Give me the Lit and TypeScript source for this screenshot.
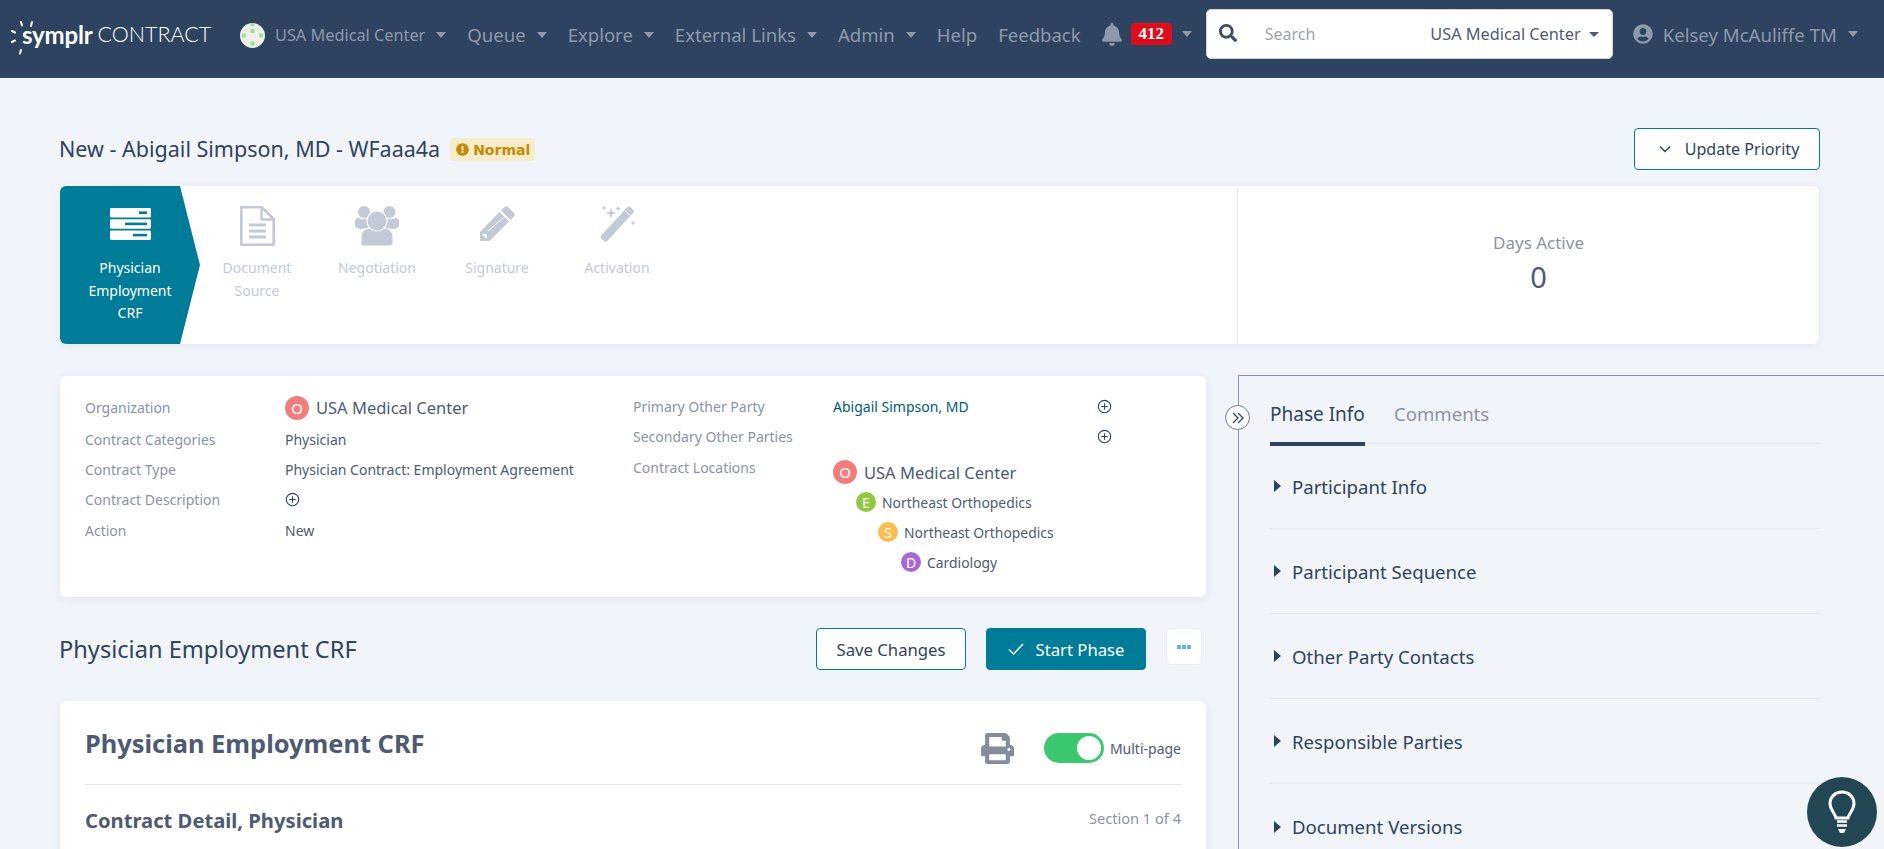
import { LitElement, html, css, svg } from "lit";
import { customElement } from "lit/decorators.js";

const P = {
  bell: "M224 512c35.32 0 63.97-28.65 63.97-64H160.03c0 35.35 28.65 64 63.97 64zm215.39-149.71c-19.32-20.76-55.47-51.99-55.47-154.29 0-77.7-54.48-139.9-127.94-155.16V32c0-17.67-14.32-32-31.98-32s-31.98 14.33-31.98 32v20.84C118.56 68.1 64.08 130.3 64.08 208c0 102.3-36.15 133.53-55.47 154.29-6 6.45-8.66 14.16-8.61 21.71.11 16.4 12.98 32 32.1 32h383.8c19.12 0 32-15.6 32.1-32 .05-7.55-2.61-15.27-8.61-21.71z",
  search: "M505 442.7L405.3 343c-4.5-4.5-10.6-7-17-7H372c27.6-35.3 44-79.7 44-128C416 93.1 322.9 0 208 0S0 93.1 0 208s93.1 208 208 208c48.3 0 92.7-16.4 128-44v16.3c0 6.4 2.5 12.5 7 17l99.7 99.7c9.4 9.4 24.6 9.4 33.9 0l28.3-28.3c9.4-9.4 9.4-24.6.1-34zM208 336c-70.7 0-128-57.2-128-128 0-70.7 57.2-128 128-128 70.7 0 128 57.2 128 128 0 70.7-57.2 128-128 128z",
  user: "M248 8C111 8 0 119 0 256s111 248 248 248 248-111 248-248S385 8 248 8zm0 96c48.6 0 88 39.4 88 88s-39.4 88-88 88-88-39.4-88-88 39.4-88 88-88zm0 344c-58.7 0-111.3-26.6-146.5-68.2 18.8-35.4 55.6-59.8 98.5-59.8 2.4 0 4.8.4 7.1 1.1 13 4.2 26.6 6.9 40.9 6.9 14.3 0 28-2.7 40.9-6.9 2.3-.7 4.7-1.1 7.1-1.1 42.9 0 79.7 24.4 98.5 59.8C359.3 421.4 306.7 448 248 448z",
  print: "M448 192V77.25c0-8.49-3.37-16.62-9.37-22.63L393.37 9.37c-6-6-14.14-9.37-22.63-9.37H96C78.33 0 64 14.33 64 32v160c-35.35 0-64 28.65-64 64v112c0 8.84 7.16 16 16 16h48v96c0 17.67 14.33 32 32 32h320c17.67 0 32-14.33 32-32v-96h48c8.84 0 16-7.16 16-16V256c0-35.35-28.65-64-64-64zm-64 256H128v-96h256v96zm0-224H128V64h192v48c0 8.84 7.16 16 16 16h48v96zm48 72c-13.25 0-24-10.75-24-24 0-13.26 10.75-24 24-24s24 10.74 24 24c0 13.25-10.75 24-24 24z",
  warn: "M504 256c0 136.997-111.043 248-248 248S8 392.997 8 256C8 119.083 119.043 8 256 8s248 111.083 248 248zm-248 50c-25.405 0-46 20.595-46 46s20.595 46 46 46 46-20.595 46-46-20.595-46-46-46zm-43.673-165.346l7.418 136c.347 6.364 5.609 11.346 11.982 11.346h48.546c6.373 0 11.635-4.982 11.982-11.346l7.418-136c.375-6.874-5.098-12.654-11.982-12.654h-63.383c-6.884 0-12.356 5.78-11.981 12.654z",
};

const caret = html`<span class="caret"></span>`;
const plus = html`<svg class="plus" viewBox="0 0 16 16"><circle cx="8" cy="8" r="6.6" fill="none" stroke="#2e4360" stroke-width="1.2"/><path d="M8 4.6v6.8M4.6 8h6.8" stroke="#2e4360" stroke-width="1.2"/></svg>`;

const spark = (x: number, y: number, r: number) =>
  `M${x} ${y - r}L${x + r * 0.22} ${y - r * 0.22}L${x + r} ${y}L${x + r * 0.22} ${y + r * 0.22}L${x} ${y + r}L${x - r * 0.22} ${y + r * 0.22}L${x - r} ${y}L${x - r * 0.22} ${y - r * 0.22}Z`;

const icons = {
  form: svg`<svg class="ico" style="width:41px;height:32px" viewBox="0 0 41 32"><g fill="#fff"><rect width="41" height="9.6" rx="1.4"/><rect y="11.2" width="41" height="9.6" rx="1.4"/><rect y="22.4" width="41" height="9.6" rx="1.4"/></g><g fill="#007c99"><rect x="29" y="3.4" width="8" height="2.6"/><rect x="15" y="14.6" width="22" height="2.6"/><rect x="23" y="25.8" width="14" height="2.6"/></g></svg>`,
  doc: svg`<svg class="ico" style="width:35px;height:40px" viewBox="0 0 35 40"><path d="M2.500 1.300h19.500L33.700 13v25.700H1.300V1.300z" fill="none" stroke="#c3c9d6" stroke-width="2.600" stroke-linejoin="round"/><path d="M21.500 2v11.500H33" fill="none" stroke="#c3c9d6" stroke-width="2.400"/><path d="M9 19h17M9 25h17M9 31h17" stroke="#c3c9d6" stroke-width="3"/></svg>`,
  users: svg`<svg class="ico" style="width:44px;height:40px" viewBox="0 0 44 40"><g fill="#c3c9d6"><circle cx="9" cy="6" r="6"/><circle cx="34.500" cy="6" r="6"/><path d="M0 15.500c0-2.300 2-3.800 4-3.300 3 1.300 5 1.300 8 .3l2 9-7 1.500c-4 0-7-1.500-7-4z"/><path d="M44 15.500c0-2.300-2-3.800-4-3.300-3 1.300-5 1.300-8 .3l-2 9 7 1.500c4 0 7-1.500 7-4z"/><path d="M6 40V31c0-5 4-9 9-9h14c5 0 9 4 9 9v5c0 2.500-1.500 4-4 4z" stroke="#fff" stroke-width="1"/><circle cx="22" cy="15" r="10" stroke="#fff" stroke-width="1.200"/></g></svg>`,
  pencil: svg`<svg class="ico" style="width:35px;height:35px" viewBox="0 0 35 35"><g fill="#c3c9d6"><path d="M24.500 1c1-1 2.500-1 3.500 0l6 6c1 1 1 2.500 0 3.500l-3.500 3.500L21 4.500z"/><path d="M19.500 6L29 15.500 10 34.500l-1 .5H0v-9z"/></g><path d="M8 25L26 9.500" stroke="#fff" stroke-width="1"/><path d="M2.500 28.500l3 .500.500 3" fill="none" stroke="#fff" stroke-width="2"/></svg>`,
  wand: svg`<svg class="ico" style="width:37px;height:36px" viewBox="0 0 37 36"><g fill="#c3c9d6"><path d="M28.500 1c.8-.8 2-.8 2.800 0l3 3c.8.8.8 2 0 2.800L8 35.200c-.8.800-2 .8-2.800 0l-3-3c-.8-.8-.8-2 0-2.800z"/><path d="${spark(12, 7, 5.5)}"/><path d="${spark(5, 2, 3)}"/><path d="${spark(19, 2.5, 3)}"/><path d="${spark(34, 17, 3)}"/></g><path d="M26 4.500l5 5" stroke="#fff" stroke-width="1"/></svg>`,
};

@customElement("app-root")
export class AppRoot extends LitElement {
  static styles = css`
    :host { display: block; width: 1884px; height: 849px; overflow: hidden; background: #f1f4f9; font-family: "Noto Sans", sans-serif; color: #2e4360; position: relative; }
    * { box-sizing: border-box; }
    svg { display: block; flex: none; }

    .nav { height: 78px; background: #2e4360; display: flex; align-items: center; padding: 0 0 10px 10px; color: #8e9aaa; font-size: 18.55px; white-space: nowrap; }
    .logo { display: flex; align-items: center; width: 230px; color: #fff; }
    .logo .sun { width: 24px; height: 40px; margin-right: -12px; overflow: visible; }
    .logo .sym { font-family: "Lato", sans-serif; font-weight: 700; font-size: 24px; letter-spacing: -.2px; margin-right: 5px; }
    .logo .con { font-family: "Lato", sans-serif; font-weight: 300; font-size: 21.5px; }
    .globe { width: 25px; height: 25px; margin: 3px 10px 0 0; }
    .org { font-size: 16.3px; }
    .item { display: flex; align-items: center; margin-right: 21px; padding-top: 1px; }
    .caret { display: inline-block; width: 0; height: 0; border-left: 5.5px solid transparent; border-right: 5.5px solid transparent; border-top: 6px solid currentColor; margin-left: 11px; }
    .bell { width: 20px; height: 23px; fill: #8e9aaa; margin-right: 9px; }
    .badge412 { background: #df0c1c; color: #fff; font: 700 17px "Liberation Serif", serif; border-radius: 4px; width: 41px; height: 22px; display: flex; align-items: center; justify-content: center; }
    .notif { margin-right: 14px; padding-top: 0; }
    .notif .caret { margin-left: 10px; }
    .searchbox { width: 407px; height: 50px; background: #fff; border: 1px solid #cfd5dd; border-radius: 5px; display: flex; align-items: center; padding: 0 13px 0 12px; margin-right: 20px; color: #4e5a73; font-size: 16.3px; }
    .searchbox .mag { width: 18px; height: 18px; fill: #3b4c66; margin-right: 28px; margin-top: -2px; }
    .searchbox .ph { color: #a0a3a8; flex: 1; font-size: 16px; }
    .searchbox .caret { margin-left: 8px; border-left-width: 5px; border-right-width: 5px; border-top-width: 5px; }
    .me { display: flex; align-items: center; font-size: 18.6px; }
    .me .uc { width: 20px; height: 20px; fill: #8e9aaa; margin-right: 10px; }

    .main { padding: 50px 65px 0 60px; }
    .titlebar { display: flex; align-items: center; height: 41px; margin-bottom: 17px; }
    .titlebar h1 { margin: 0 0 0 -1px; font-size: 21.5px; font-weight: 400; color: #2e4360; }
    .pri { display: flex; align-items: center; gap: 4px; height: 23px; width: 85px; padding-left: 6px; margin-left: 10px; margin-top: 2px; background: #f6ecc9; color: #c58a08; border-radius: 4px; font: 700 14px "DejaVu Sans", sans-serif; }
    .pri svg { width: 13px; height: 13px; fill: #c58a08; }
    .btn { display: flex; align-items: center; justify-content: center; height: 42px; border: 1px solid #007c99; background: #fff; border-radius: 4px; font-size: 16.7px; color: #2e4360; white-space: nowrap; }
    .upd { width: 186px; margin: 0 -1px 0 auto; gap: 14px; font-size: 16.1px; padding-left: 4px; }
    .upd svg { width: 12px; height: 8px; }

    .stages { height: 158px; background: #fff; border-radius: 6px; box-shadow: 0 2px 8px rgba(60,80,110,.08); display: flex; overflow: hidden; }
    .step { width: 120px; display: flex; flex-direction: column; align-items: center; text-align: center; color: #c3c9d6; font-size: 14px; line-height: 22.5px; }
    .step .icw { height: 48px; margin-top: 20px; margin-bottom: 3px; display: flex; align-items: flex-start; }
    .step.first { width: 140px; margin-right: -3px; background: #007c99; color: #fff; clip-path: polygon(0 0, 120px 0, 140px 50%, 120px 100%, 0 100%); }
    .step.first .icw { margin-top: 22px; height: 46px; }
    .days { margin-left: auto; width: 582px; border-left: 1px solid #e6e9ee; padding: 45px 0 0 20px; text-align: center; color: #8b93a3; font-size: 17px; }
    .days b { display: block; font-weight: 400; font-size: 29px; color: #4e5a73; line-height: 40px; margin-top: 3px; }

    .cols { display: flex; margin-top: 32px; }
    .left { width: 1146px; flex: none; }

    .card { background: #fff; border-radius: 6px; box-shadow: 0 2px 8px rgba(60,80,110,.08); }
    .info { height: 221px; display: grid; grid-template-columns: 548px 1fr; padding: 15px 0 0 25px; font-size: 14px; }
    .irow { display: flex; align-items: center; height: 30px; }
    .k { color: #8b93a3; flex: none; width: 200px; }
    .c1 .irow { color: #4e5a73; }
    .c1 .irow.top { height: 33px; }
    .c1 .irow.last { height: 32px; }
    .link { color: #005b73; width: 0; white-space: nowrap; }
    .plus { width: 15px; height: 15px; }
    .c2 .plus { margin-left: 264px; }
    .orgv { display: flex; align-items: center; gap: 7px; font-size: 16.5px; color: #4e5a73; }
    .dot { width: 24px; height: 24px; border-radius: 50%; display: flex; align-items: center; justify-content: center; color: #fff; font-size: 15px; flex: none; }
    .dot.o { background: #f27d7d; }
    .dot.sm { width: 20px; height: 20px; font-size: 14px; }
    .dot.e { background: #90c83f; }
    .dot.s { background: #fbbd51; }
    .dot.d { background: #aa68d3; }
    .tree { display: flex; align-items: center; gap: 6px; height: 30px; color: #4e5a73; font-size: 13.9px; }
    .tree.l1 { padding-left: 23px; }
    .tree.l2 { padding-left: 45px; }
    .tree.l3 { padding-left: 68px; }
    .locs { display: flex; align-items: flex-start; }
    .locs .k { margin-top: 7px; line-height: 19px; }
    .locs .orgv { height: 30px; margin-top: 6px; }

    .phase { display: flex; align-items: center; height: 42px; margin: 31px 0; }
    .phase h2 { margin: 0 auto 0 -1px; font-size: 23.6px; font-weight: 400; color: #2e4360; }
    .save { width: 150px; }
    .start { width: 160px; margin-left: 20px; background: #007c99; color: #fff; gap: 12px; }
    .start svg { width: 16px; height: 12px; }
    .more { width: 36px; height: 37px; margin: 0 4px 5px 20px; background: #fff; border: 1px solid #e9ecf1; border-radius: 4px; display: flex; align-items: center; justify-content: center; gap: 1px; }
    .more i { width: 4px; height: 4px; background: #62b4ea; display: block; }

    .form { height: 300px; padding: 0 25px; }
    .fhead { display: flex; align-items: center; height: 84px; border-bottom: 1px solid #e3e6ea; }
    .fhead h3 { margin: 0 auto 0 0; font-size: 25.4px; font-weight: 700; color: #4e5a73; }
    .prt { width: 33px; height: 31px; fill: #858d9c; margin: 11px 30px 0 0; }
    .tog { width: 60px; height: 30px; background: #3bc86f; border-radius: 15px; display: flex; align-items: center; justify-content: flex-end; padding-right: 3px; margin: 11px 6px 0 0; }
    .tog i { width: 24px; height: 24px; background: #fff; border-radius: 50%; display: block; }
    .mp { font-size: 14px; color: #4e5a73; margin-top: 11px; }
    .sect { display: flex; align-items: center; justify-content: space-between; height: 70px; }
    .sect h4 { margin: 0; font-size: 20.2px; font-weight: 700; color: #4e5a73; }
    .sect span { font-size: 14.6px; color: #8b93a3; margin-top: -4px; }

    .panel { position: relative; margin: -1px -65px 0 32px; flex: none; width: 646px; height: 600px; border-left: 1px solid #8a93a5; border-top: 1px solid #8a93a5; padding: 0 64px 0 31px; }
    .coll { position: absolute; left: -14px; top: 29px; width: 25px; height: 25px; border-radius: 50%; background: #fff; border: 1px solid #6b7a90; display: flex; align-items: center; justify-content: center; }
    .coll svg { width: 14px; height: 12px; }
    .tabs { display: flex; gap: 29px; height: 68px; border-bottom: 1px solid #e6e9ee; font-size: 19px; }
    .tab { color: #8b93a3; padding-top: 25px; height: 70px; line-height: 26px; font-size: 18.6px; }
    .tab.on { color: #2e4360; border-bottom: 4px solid #2e4360; font-size: 19px; }
    .acc { height: 85px; border-bottom: 1px solid #e6e9ee; display: flex; align-items: center; font-size: 18.6px; color: #2e4360; padding-left: 4px; gap: 11px; }
    .acc:last-child { border-bottom: none; }
    .tri { width: 0; height: 0; border-top: 6px solid transparent; border-bottom: 6px solid transparent; border-left: 7px solid #2e4360; flex: none; }
    .fab { position: absolute; left: 1807px; top: 777px; width: 70px; height: 70px; border-radius: 50%; background: #224654; display: flex; align-items: center; justify-content: center; }
    .fab svg { width: 28px; height: 44px; }
  `;

  render() {
    const nav = (t: string) => html`<div class="item">${t}${caret}</div>`;
    const accs = ["Participant Info", "Participant Sequence", "Other Party Contacts", "Responsible Parties", "Document Versions"];
    return html`
      <header class="nav">
        <div class="logo">
          <svg class="sun" viewBox="0 0 24 40"><g stroke="#fff" stroke-width="2" stroke-linecap="round" fill="none"><path d="M11 8l1 3.500M22 8l-1 4M2 17l3 1.500M2 28l3-1.500M11 36l-1 3.500"/></g></svg>
          <span class="sym">symplr</span><span class="con">CONTRACT</span>
        </div>
        <svg class="globe" viewBox="0 0 25 25"><circle cx="12.500" cy="12.500" r="12.500" fill="#ecf1ec"/><g fill="#a4dc90"><rect x="10.500" y="0" width="4" height="3"/><rect x="10.500" y="6" width="4" height="4"/><rect x="2" y="10.500" width="4" height="4"/><rect x="19" y="10.500" width="4" height="4"/><rect x="10.500" y="18.500" width="4" height="4"/></g></svg>
        <div class="item org">USA Medical Center${caret}</div>
        ${nav("Queue")}${nav("Explore")}${nav("External Links")}${nav("Admin")}
        <div class="item">Help</div>
        <div class="item">Feedback</div>
        <div class="item notif">
          <svg class="bell" viewBox="0 0 448 512"><path d="${P.bell}"/></svg>
          <span class="badge412">412</span>${caret}
        </div>
        <div class="searchbox">
          <svg class="mag" viewBox="0 0 512 512"><path d="${P.search}"/></svg>
          <span class="ph">Search</span>
          <span>USA Medical Center</span>${caret}
        </div>
        <div class="me">
          <svg class="uc" viewBox="0 0 496 512"><path d="${P.user}"/></svg>
          Kelsey McAuliffe TM${caret}
        </div>
      </header>

      <main class="main">
        <div class="titlebar">
          <h1>New - Abigail Simpson, MD - WFaaa4a</h1>
          <span class="pri"><svg viewBox="0 0 512 512"><path d="${P.warn}"/></svg>Normal</span>
          <div class="btn upd">
            <svg viewBox="0 0 12 8"><path d="M1 1.500l5 5 5-5" fill="none" stroke="#2e4360" stroke-width="1.500"/></svg>
            Update Priority
          </div>
        </div>

        <section class="stages">
          <div class="step first"><div class="icw">${icons.form}</div><div>Physician<br />Employment<br />CRF</div></div>
          <div class="step"><div class="icw">${icons.doc}</div><div>Document<br />Source</div></div>
          <div class="step"><div class="icw">${icons.users}</div><div>Negotiation</div></div>
          <div class="step"><div class="icw">${icons.pencil}</div><div>Signature</div></div>
          <div class="step"><div class="icw">${icons.wand}</div><div>Activation</div></div>
          <div class="days">Days Active<b>0</b></div>
        </section>

        <div class="cols">
          <div class="left">
            <section class="card info">
              <div class="c1">
                <div class="irow top"><span class="k">Organization</span><span class="orgv"><span class="dot o">O</span>USA Medical Center</span></div>
                <div class="irow"><span class="k">Contract Categories</span>Physician</div>
                <div class="irow"><span class="k">Contract Type</span>Physician Contract: Employment Agreement</div>
                <div class="irow"><span class="k">Contract Description</span>${plus}</div>
                <div class="irow last"><span class="k">Action</span>New</div>
              </div>
              <div class="c2">
                <div class="irow"><span class="k">Primary Other Party</span><span class="link">Abigail Simpson, MD</span>${plus}</div>
                <div class="irow"><span class="k">Secondary Other Parties</span>${plus}</div>
                <div class="locs">
                  <span class="k">Contract Locations</span>
                  <div>
                    <div class="orgv"><span class="dot o">O</span>USA Medical Center</div>
                    <div class="tree l1"><span class="dot sm e">E</span>Northeast Orthopedics</div>
                    <div class="tree l2"><span class="dot sm s">S</span>Northeast Orthopedics</div>
                    <div class="tree l3"><span class="dot sm d">D</span>Cardiology</div>
                  </div>
                </div>
              </div>
            </section>

            <div class="phase">
              <h2>Physician Employment CRF</h2>
              <div class="btn save">Save Changes</div>
              <div class="btn start"><svg viewBox="0 0 16 12"><path d="M1 6.500l4.500 4.500L15 1" fill="none" stroke="#fff" stroke-width="1.400"/></svg>Start Phase</div>
              <div class="more"><i></i><i></i><i></i></div>
            </div>

            <section class="card form">
              <div class="fhead">
                <h3>Physician Employment CRF</h3>
                <svg class="prt" viewBox="0 0 512 512" preserveAspectRatio="none"><path d="${P.print}"/></svg>
                <div class="tog"><i></i></div>
                <span class="mp">Multi-page</span>
              </div>
              <div class="sect"><h4>Contract Detail, Physician</h4><span>Section 1 of 4</span></div>
            </section>
          </div>

          <aside class="panel">
            <div class="coll"><svg viewBox="0 0 14 12"><path d="M2 1l5 5-5 5M7 1l5 5-5 5" fill="none" stroke="#2e4360" stroke-width="1.300"/></svg></div>
            <div class="tabs"><div class="tab on">Phase Info</div><div class="tab">Comments</div></div>
            ${accs.map((a) => html`<div class="acc"><span class="tri"></span>${a}</div>`)}
          </aside>
        </div>
      </main>

      <div class="fab">
        <svg viewBox="0 0 28 44"><path d="M14 2C7 2 2 7 2 13.500c0 6 4.500 9 6 14.500h12c1.500-5.500 6-8.500 6-14.500C26 7 21 2 14 2z" fill="none" stroke="#fff" stroke-width="3"/><path d="M9 31.500h10M9 35.500h10" stroke="#fff" stroke-width="2.400"/><path d="M10 39h8l-2 4h-4z" fill="#fff"/></svg>
      </div>
    `;
  }
}
